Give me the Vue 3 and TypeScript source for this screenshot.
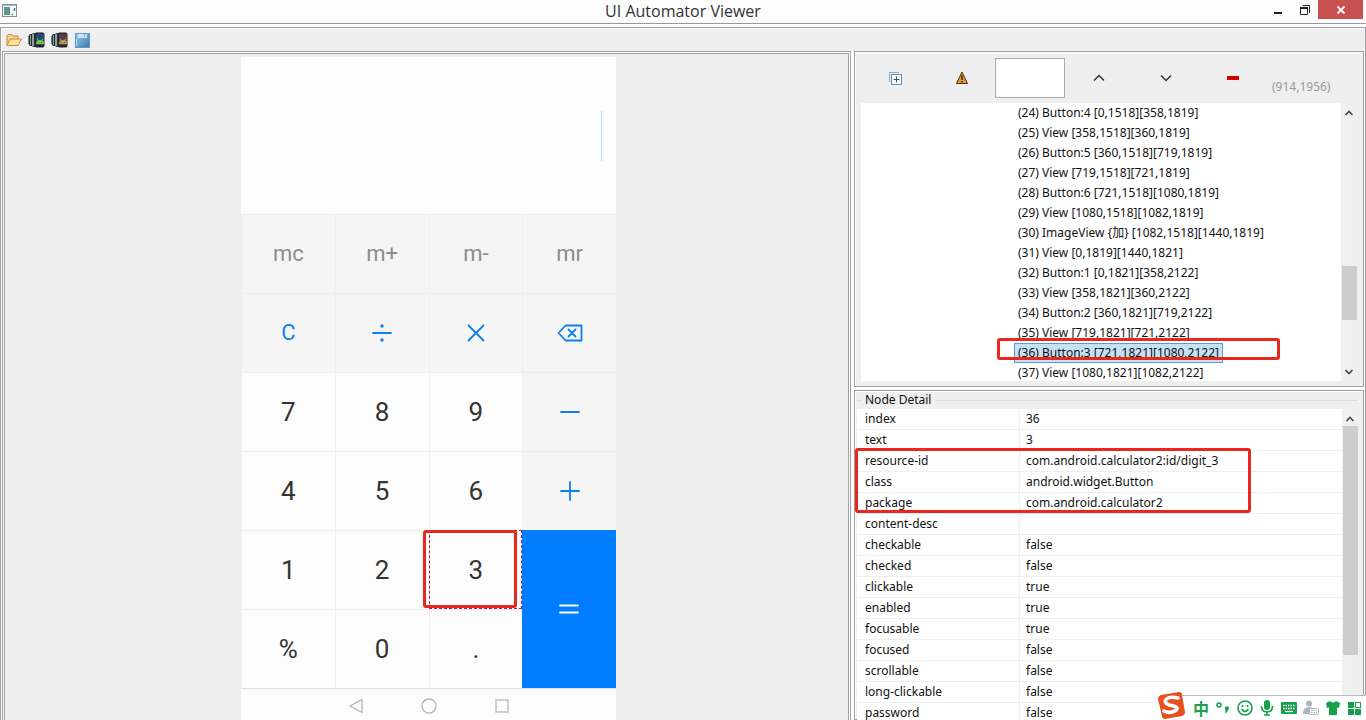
<script setup lang="ts">
interface Key { label?: string; icon?: string; kind: string }

const tree: string[] = [
  '(24) Button:4 [0,1518][358,1819]',
  '(25) View [358,1518][360,1819]',
  '(26) Button:5 [360,1518][719,1819]',
  '(27) View [719,1518][721,1819]',
  '(28) Button:6 [721,1518][1080,1819]',
  '(29) View [1080,1518][1082,1819]',
  '(30) ImageView {加} [1082,1518][1440,1819]',
  '(31) View [0,1819][1440,1821]',
  '(32) Button:1 [0,1821][358,2122]',
  '(33) View [358,1821][360,2122]',
  '(34) Button:2 [360,1821][719,2122]',
  '(35) View [719,1821][721,2122]',
  '(36) Button:3 [721,1821][1080,2122]',
  '(37) View [1080,1821][1082,2122]',
]
const selected = 12

const details: [string, string][] = [
  ['index', '36'],
  ['text', '3'],
  ['resource-id', 'com.android.calculator2:id/digit_3'],
  ['class', 'android.widget.Button'],
  ['package', 'com.android.calculator2'],
  ['content-desc', ''],
  ['checkable', 'false'],
  ['checked', 'false'],
  ['clickable', 'true'],
  ['enabled', 'true'],
  ['focusable', 'true'],
  ['focused', 'false'],
  ['scrollable', 'false'],
  ['long-clickable', 'false'],
  ['password', 'false'],
]

const keys: Key[] = [
  { label: 'mc', kind: 'mem' }, { label: 'm+', kind: 'mem' }, { label: 'm-', kind: 'mem' }, { label: 'mr', kind: 'mem' },
  { label: 'C', kind: 'op' }, { icon: 'divide', kind: 'op' }, { icon: 'times', kind: 'op' }, { icon: 'delete', kind: 'op' },
  { label: '7', kind: 'num' }, { label: '8', kind: 'num' }, { label: '9', kind: 'num' }, { icon: 'minus', kind: 'op' },
  { label: '4', kind: 'num' }, { label: '5', kind: 'num' }, { label: '6', kind: 'num' }, { icon: 'plus', kind: 'op' },
  { label: '1', kind: 'num' }, { label: '2', kind: 'num' }, { label: '3', kind: 'num picked' }, { icon: 'equals', kind: 'eq' },
  { label: '%', kind: 'num' }, { label: '0', kind: 'num' }, { label: '.', kind: 'num' },
]

const iconPaths: Record<string, string> = {
  divide: 'M5 14H23',
  times: 'M6.500 6.500L21.500 21.500M21.500 6.500L6.500 21.500',
  delete: 'M9.500 6.500H25.500V21.500H9.500L2.500 14ZM12.500 10.500L19.500 17.500M19.500 10.500L12.500 17.500',
  minus: 'M5 14H23',
  plus: 'M5 14H23M14 5V23',
  equals: 'M5 10.500H23M5 17.500H23',
}
</script>

<template>
  <div class="window">
    <header class="titlebar">
      <svg class="app-icon" width="16" height="14" viewBox="0 0 16 14" aria-hidden="true">
        <rect x=".5" y=".5" width="14" height="12" fill="#f6fafa" stroke="#7d8f9c" />
        <path d="M1 1.500H14" stroke="#a9bfd0" />
        <rect x="2" y="3" width="6" height="8" fill="#5f9488" />
        <path d="M9.500 10.500H11M12.500 4V7" stroke="#3f7c9c" stroke-width="1.500" />
      </svg>
      <h1>UI Automator Viewer</h1>
      <div class="win-buttons">
        <button class="wb" type="button" aria-label="Minimize">
          <svg width="12" height="12" viewBox="0 0 12 12"><path d="M2 9H10" stroke="#222" stroke-width="2" /></svg>
        </button>
        <button class="wb" type="button" aria-label="Restore">
          <svg width="12" height="12" viewBox="0 0 12 12"><path d="M1.500 4H8.500V10.500H1.500ZM3.500 1.500H10.500V9" fill="none" stroke="#222" /><path d="M1 4H9" stroke="#222" stroke-width="2" /></svg>
        </button>
        <button class="close" type="button" aria-label="Close">
          <svg width="10" height="10" viewBox="0 0 10 10"><path d="M1.500 1.500L8.500 8.500M8.500 1.500L1.500 8.500" stroke="#fff" stroke-width="1.800" /></svg>
        </button>
      </div>
    </header>

    <div class="frame">
      <div class="toolbar">
        <button type="button" aria-label="Open">
          <svg width="16" height="14" viewBox="0 0 16 14"><path d="M1 12V2.500L2 1.500H5.500L7 3H12V6" fill="#f4d690" stroke="#c08a3c" /><path d="M1 12.500L4 6H15.500L12 12.500Z" fill="#fbdf9a" stroke="#c78d3b" /></svg>
        </button>
        <button v-for="(c, i) in ['#1f4d7a', '#5b3c46']" :key="i" type="button" :aria-label="i ? 'Compressed device screenshot' : 'Device screenshot'">
          <svg width="17" height="16" viewBox="0 0 17 16">
            <path d="M2 2H4V14H2L.5 12V4Z" fill="#1d2b2c" /><path d="M4.500 1H7V15H4.500Z" fill="#354849" />
            <path d="M2.500 3V13M5.500 2V14" stroke="#86a5a0" />
            <rect x="6.500" y=".5" width="10" height="15" rx="2" fill="#25262c" /><rect x="8" y="2" width="8" height="11" :fill="c" />
            <path d="M8 12Q8 8 12 8T16 12Z" :fill="i ? '#b5a14c' : '#83c83a'" />
            <path d="M9 6.500L10.500 9M15 6.500L13.500 9" :stroke="i ? '#b5a14c' : '#83c83a'" />
            <path d="M10.500 10.500H11M13 10.500H13.500" stroke="#24413a" />
          </svg>
        </button>
        <button type="button" aria-label="Save">
          <svg width="15" height="15" viewBox="0 0 15 15">
            <defs><linearGradient id="disk" x2="1" y2="1"><stop stop-color="#9ccaf0" /><stop offset="1" stop-color="#3b78ad" /></linearGradient></defs>
            <rect x=".5" y=".5" width="14" height="14" fill="url(#disk)" stroke="#6395bd" /><path d="M3 1H12V5H3Z" fill="#cfe3f4" /><path d="M9.500 1V4" stroke="#80aacd" /><path d="M1.500 6V13" stroke="#b9dbf3" />
          </svg>
        </button>
      </div>

      <main class="panes">
        <section class="device" aria-label="Device screenshot">
          <div class="phone">
            <div class="display"><span class="caret"></span></div>
            <div class="keypad">
              <button v-for="(k, i) in keys" :key="i" type="button" :class="k.kind" :aria-label="k.label ?? k.icon">
                <template v-if="k.label">{{ k.label }}</template>
                <svg v-else width="28" height="28" viewBox="0 0 28 28" fill="none" stroke="currentColor" stroke-width="1.800" stroke-linecap="round" stroke-linejoin="round">
                  <path :d="iconPaths[k.icon!]" />
                  <g v-if="k.icon === 'divide'" fill="currentColor" stroke="none"><circle cx="14" cy="7" r="1.700" /><circle cx="14" cy="21" r="1.700" /></g>
                </svg>
                <span v-if="k.kind.includes('picked')" class="mark key-mark"></span>
              </button>
            </div>
            <nav class="navbar" aria-label="Device navigation">
              <svg width="16" height="16" viewBox="0 0 16 16"><path d="M14 1.500V14.500L2 8Z" /></svg>
              <svg width="16" height="16" viewBox="0 0 16 16"><circle cx="8" cy="8" r="7" /></svg>
              <svg width="16" height="16" viewBox="0 0 16 16"><rect x="2" y="2" width="12" height="12" /></svg>
            </nav>
          </div>
        </section>

        <div class="side">
          <section class="pane tree-pane">
            <div class="tree-tools">
              <button type="button" aria-label="Expand all">
                <svg width="14" height="14" viewBox="0 0 14 14" fill="#fff"><path d="M1.500 11V1.500H11" fill="none" stroke="#84aec9" /><rect x="3.500" y="3.500" width="10" height="10" stroke="#5a91b5" /><path d="M5.500 8.500H11.500M8.500 5.500V11.500" stroke="#245b84" /></svg>
              </button>
              <button type="button" aria-label="Toggle NAF nodes">
                <svg width="14" height="14" viewBox="0 0 14 14"><path d="M7 1L12.500 12.500H1.500Z" fill="#e89a2c" stroke="#4a3212" /><path d="M7 4.500V9M7 10V11.500" stroke="#3a260b" stroke-width="1.500" /></svg>
              </button>
              <input type="text" aria-label="Search" />
              <button type="button" aria-label="Previous">
                <svg width="12" height="12" viewBox="0 0 12 12"><path d="M1 8.500L6 3.500L11 8.500" fill="none" stroke="#333" stroke-width="1.500" /></svg>
              </button>
              <button type="button" aria-label="Next">
                <svg width="12" height="12" viewBox="0 0 12 12"><path d="M1 3.500L6 8.500L11 3.500" fill="none" stroke="#333" stroke-width="1.500" /></svg>
              </button>
              <button type="button" aria-label="Clear">
                <svg width="12" height="12" viewBox="0 0 12 12"><path d="M0 6H12" stroke="#d40000" stroke-width="4" /></svg>
              </button>
              <output>(914,1956)</output>
            </div>
            <div class="scroller tree-scroller">
              <ul class="tree">
                <li v-for="(n, i) in tree" :key="n"><span :class="{ sel: i === selected }">{{ n }}</span><i v-if="i === selected" class="mark node-mark"></i></li>
              </ul>
              <div class="bar">
                <svg width="10" height="8" viewBox="0 0 10 8"><path d="M1.500 6L5 2.500L8.500 6" /></svg>
                <span class="thumb tree-thumb"></span>
                <svg width="10" height="8" viewBox="0 0 10 8"><path d="M1.500 2L5 5.500L8.500 2" /></svg>
              </div>
            </div>
          </section>

          <section class="pane detail-pane">
            <fieldset>
              <legend>Node Detail</legend>
              <div class="scroller">
                <div class="table-wrap">
                  <table>
                    <tbody>
                      <tr v-for="[name, value] in details" :key="name"><th scope="row">{{ name }}</th><td>{{ value }}</td></tr>
                    </tbody>
                  </table>
                </div>
                <div class="bar">
                  <svg width="10" height="8" viewBox="0 0 10 8"><path d="M1.500 6L5 2.500L8.500 6" /></svg>
                  <span class="thumb detail-thumb"></span>
                </div>
              </div>
            </fieldset>
            <span class="mark detail-mark"></span>
          </section>
        </div>
      </main>
    </div>

    <aside class="ime" aria-label="Input method">
      <svg class="logo" width="30" height="30" viewBox="0 0 30 30" aria-hidden="true">
        <path d="M4 5L22 2Q25 2 25 5L28 22Q28 25 25 26L8 29Q5 29 5 26L1 9Q1 6 4 5Z" fill="#e9501f" />
        <path d="M21 8Q13 6 9.500 9T12 15Q19 16 20 18T15 22Q11 23 7 21" fill="none" stroke="#fff" stroke-width="3.600" stroke-linecap="round" />
      </svg>
      <span class="zh">中</span>
      <svg width="16" height="16" viewBox="0 0 16 16"><circle cx="4" cy="5" r="2" fill="none" stroke="#16a04c" stroke-width="1.500" /><path d="M10 8.500A2 2 0 1 1 13 10Q12.500 12.500 10 13.500L10.500 11Z" fill="#16a04c" /></svg>
      <svg width="16" height="16" viewBox="0 0 16 16" fill="none" stroke="#16a04c" stroke-width="1.600"><circle cx="8" cy="8" r="7" /><path d="M4.500 9Q8 14 11.500 9M5.500 5V7M10.500 5V7" /></svg>
      <svg width="16" height="16" viewBox="0 0 16 16"><rect x="5" y="0" width="6" height="10" rx="3" fill="#16a04c" /><path d="M2.500 6Q2.500 12 8 12T13.500 6M8 12V15M5 15H11" fill="none" stroke="#16a04c" stroke-width="1.600" /></svg>
      <svg width="16" height="16" viewBox="0 0 16 16"><rect x="0" y="2" width="16" height="12" rx="1" fill="#16a04c" /><path d="M2 5.500H14M2 8.500H14" stroke="#fff" stroke-width="1.300" stroke-dasharray="1.500 1" /><path d="M4 11.500H12" stroke="#fff" stroke-width="1.300" /></svg>
      <svg width="16" height="16" viewBox="0 0 16 16"><circle cx="6" cy="3.500" r="3" fill="#adb5c0" /><path d="M0 14Q0 7 6 7Q9 7 10 9V14Z" fill="#adb5c0" /><rect x="6.500" y="8.500" width="9" height="6" rx="1" fill="#fff" stroke="#adb5c0" /><path d="M8 10.500H14M8 12.500H14" stroke="#adb5c0" stroke-dasharray="1.500 1" /></svg>
      <svg width="16" height="16" viewBox="0 0 16 16"><path d="M5 1Q8 4 11 1L15 3L14 8L12 7.500V15H4V7.500L2 8L1 3Z" fill="#16a04c" /></svg>
      <svg width="16" height="16" viewBox="0 0 16 16"><path d="M1 2H7V8H1ZM1 9H7V15H1ZM8 9H14V15H8Z" fill="#16a04c" /><rect x="8.500" y="2.500" width="5" height="5" fill="none" stroke="#16a04c" /></svg>
    </aside>
  </div>
</template>

<style>
html, body { margin: 0; overflow: hidden; }
</style>

<style scoped>
* { box-sizing: border-box; }
.window { position: relative; height: 100vh; display: flex; flex-direction: column; overflow: hidden; background: #fcfcfc; color: #111; font: 12px/20px "Noto Sans", "Noto Sans CJK SC", sans-serif; }
button { display: flex; align-items: center; justify-content: center; padding: 0; border: 0; background: none; font: inherit; color: inherit; }
.titlebar { flex: none; height: 24px; display: grid; grid-template-columns: 1fr auto 1fr; border-bottom: 1px solid #999; }
.app-icon { margin: 4px 2px; }
h1 { margin: 0; font: 16px/23px "Open Sans", "Noto Sans", sans-serif; color: #333; }
.win-buttons { display: flex; justify-content: flex-end; margin-right: 3px; height: 19px; }
.wb { width: 27px; }
.close { width: 45px; background: #c75050; }
.frame { flex: 1; min-height: 0; margin-top: 3px; display: flex; flex-direction: column; border: 1px solid #a0a0a0; border-bottom: 0; background: #fff; padding: 1px 0 0 1px; }
.toolbar { flex: none; height: 22px; display: flex; align-items: center; gap: 6px; padding-left: 3px; background: #efefef; }
.toolbar button { width: 17px; }
.panes { flex: 1; min-height: 0; display: grid; grid-template-columns: 849fr 510fr; gap: 3px; padding-right: 1px; }
.pane { border: 1px solid #a0a0a0; background: #efefef; box-shadow: inset 1px 1px #fff; }
.device { display: flex; justify-content: center; padding: 3px 0 0 4px; min-height: 0; overflow: hidden; border: 3px double #a0a0a0; border-bottom: 0; background: #efefef; background-clip: padding-box; }
.phone { width: 375px; display: flex; flex-direction: column; background: #fcfcfc; font-family: Roboto, sans-serif; }
.display { flex: none; height: 157px; display: flex; justify-content: flex-end; align-items: center; padding-right: 14px; }
.caret { width: 1px; height: 50px; background: #b8d4ee; }
.keypad { flex: none; display: grid; grid-template-columns: repeat(4, 1fr); grid-auto-rows: 79px; }
.keypad button { position: relative; border-top: 1px solid #eee; border-left: 1px solid #f0f0f0; font-size: 26px; color: #333; background: #fcfcfc; }
.keypad .mem { background: #f5f5f5; color: #8c8c8c; font-size: 22px; }
.keypad .op { background: #f5f5f5; color: #0f7ff0; font-size: 22px; }
.keypad .eq { grid-row: span 2; background: #007dff; color: #fff; border: 0; }
.keypad .picked { outline: 1px dashed #b3203a; outline-offset: -1px; }
.navbar { flex: none; height: 35px; display: flex; justify-content: center; align-items: center; gap: 57px; border-top: 1px solid #e0e0e0; }
.navbar svg { fill: none; stroke: #b5b5b5; stroke-width: 1.300; }
.side { min-width: 0; min-height: 0; display: flex; flex-direction: column; gap: 3px; }
.tree-pane { flex: none; padding: 6px 6px 5px; }
.tree-tools { height: 45px; display: flex; align-items: flex-start; }
.tree-tools button { width: 67px; height: 40px; }
.tree-tools input { width: 70px; height: 40px; border: 1px solid #aaa; background: #fff; }
.tree-tools output { margin: 19px 0 0 6px; color: #999; }
.scroller { display: flex; background: #fff; }
.tree-scroller { height: 278px; }
.tree { flex: 1; margin: 0; padding: 0 0 0 153px; list-style: none; }
.tree li { position: relative; height: 20px; white-space: nowrap; }
.tree span { display: inline-block; height: 20px; padding: 0 4px; }
.tree .sel { background: #c5e2f5; box-shadow: inset 0 0 0 1px #5b9bd5; }
.bar { width: 16px; display: flex; flex-direction: column; align-items: center; background: #f0f0f0; padding: 6px 0 5px; }
.bar svg { flex: none; fill: none; stroke: #444; stroke-width: 1.600; }
.thumb { width: 15px; background: #cdcdcd; }
.tree-thumb { height: 54px; margin: 149px 0 auto; }
.detail-thumb { height: 229px; margin-top: 3px; }
.detail-pane { position: relative; flex: 1; min-height: 0; padding: 0 5px 0 2px; }
fieldset { min-width: 0; margin: 0; padding: 0; border: 1px solid #ddd; border-width: 1px 0 0; }
legend { margin-left: 4px; padding: 0 4px; line-height: 18px; }
.table-wrap { flex: 1; }
table { width: 100%; border-spacing: 0; table-layout: fixed; }
th, td { height: 21px; padding: 0 6px; border-bottom: 1px solid #efefef; text-align: left; font-weight: 400; line-height: 20px; }
th { width: 163px; padding-left: 8px; border-right: 1px solid #efefef; }
.mark { position: absolute; border: 3px solid #e8281c; border-radius: 3px; pointer-events: none; }
.key-mark { left: -7px; top: -1px; width: 94px; height: 78px; }
.node-mark { left: -17px; top: -5px; width: 283px; height: 22px; }
.detail-mark { left: 0; top: 57px; width: 396px; height: 65px; }
.ime { position: absolute; right: 0; bottom: 0; height: 25px; display: flex; align-items: center; gap: 6px; padding: 0 3px; background: #fff; border-top: 1px solid #bbb; }
.logo { margin: -6px 0 0 -12px; }
.zh { color: #16a04c; font: 700 16px/22px "Noto Sans CJK SC", sans-serif; }
</style>
